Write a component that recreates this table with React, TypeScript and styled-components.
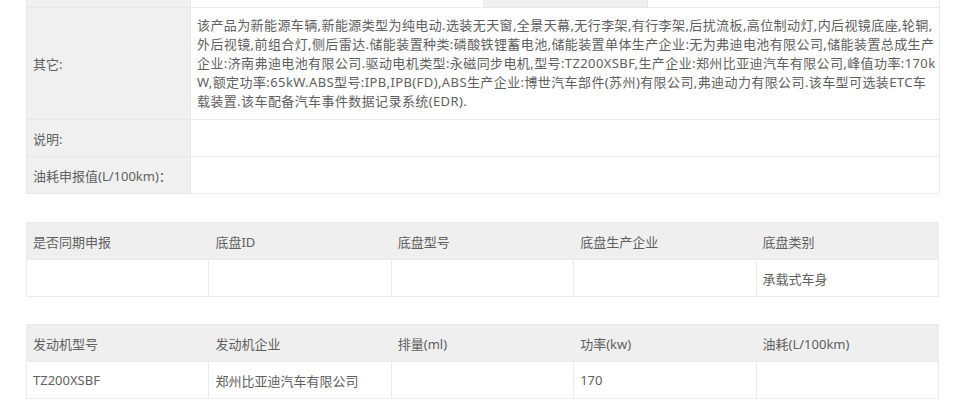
import React from "react";
import styled, { createGlobalStyle } from "styled-components";

const Global = createGlobalStyle`
  html, body { margin: 0; padding: 0; background: #fff; overflow: hidden; }
  body {
    font-family: "Noto Sans", "Noto Sans CJK SC", sans-serif;
    font-size: 13px;
    color: #606060;
  }
`;

const Page = styled.div`
  width: 960px;
  height: 407px;
  overflow: hidden;
  padding: 0 21px 0 26px;
  box-sizing: border-box;
`;

const Table = styled.table<{ $gap?: number }>`
  width: 913px;
  border-collapse: collapse;
  table-layout: fixed;
  margin-top: ${(p) => p.$gap ?? 0}px;
  border: 1px solid #ebebeb;
`;

const Label = styled.td`
  background: #f0f0f0;
  border: 1px solid #e6e6e6;
  padding: 0 6px;
  height: 36px;
  vertical-align: middle;
  white-space: nowrap;
`;

const Value = styled.td`
  background: #fff;
  border: 1px solid #ebebeb;
  padding: 0 6px;
  height: 36px;
  vertical-align: middle;
`;

const LongValue = styled(Value)`
  padding: 8px 6px;
  line-height: 19px;
`;

const Line = styled.span`
  display: block;
  white-space: nowrap;
  letter-spacing: 0.4px;
`;

const TopRow = styled.tr`
  height: 36px;
`;

const Head = styled.td`
  background: #efefef;
  border: 1px solid #ebebeb;
  border-left-color: #efefef;
  border-right-color: #efefef;
  padding: 0 6px;
  height: 36px;
  vertical-align: middle;
`;

const Cell = styled.td`
  background: #fff;
  border: 1px solid #ebebeb;
  padding: 0 6px;
  height: 36px;
  vertical-align: middle;
`;

const Shift = styled.div`
  margin-top: -30px;
`;

const otherLines = [
  "该产品为新能源车辆,新能源类型为纯电动.选装无天窗,全景天幕,无行李架,有行李架,后扰流板,高位制动灯,内后视镜底座,轮辋,",
  "外后视镜,前组合灯,侧后雷达.储能装置种类:磷酸铁锂蓄电池,储能装置单体生产企业:无为弗迪电池有限公司,储能装置总成生产",
  "企业:济南弗迪电池有限公司.驱动电机类型:永磁同步电机,型号:TZ200XSBF,生产企业:郑州比亚迪汽车有限公司,峰值功率:170k",
  "W,额定功率:65kW.ABS型号:IPB,IPB(FD),ABS生产企业:博世汽车部件(苏州)有限公司,弗迪动力有限公司.该车型可选装ETC车",
  "载装置.该车配备汽车事件数据记录系统(EDR).",
];

const chassisHead = ["是否同期申报", "底盘ID", "底盘型号", "底盘生产企业", "底盘类别"];
const chassisRow = ["", "", "", "", "承载式车身"];
const engineHead = ["发动机型号", "发动机企业", "排量(ml)", "功率(kw)", "油耗(L/100km)"];
const engineRow = ["TZ200XSBF", "郑州比亚迪汽车有限公司", "", "170", ""];

function Grid({ head, row, gap }: { head: string[]; row: string[]; gap: number }) {
  return (
    <Table $gap={gap}>
      <tbody>
        <tr>
          {head.map((h, i) => (
            <Head key={i}>{h}</Head>
          ))}
        </tr>
        <tr>
          {row.map((c, i) => (
            <Cell key={i}>{c}</Cell>
          ))}
        </tr>
      </tbody>
    </Table>
  );
}

export default function App() {
  return (
    <Page>
      <Global />
      <Shift>
        <Table>
          <colgroup>
            <col style={{ width: 164 }} />
            <col style={{ width: 293 }} />
            <col style={{ width: 164 }} />
            <col style={{ width: 292 }} />
          </colgroup>
          <tbody>
            <TopRow>
              <Label></Label>
              <Value></Value>
              <Label></Label>
              <Value></Value>
            </TopRow>
            <tr>
              <Label>其它:</Label>
              <LongValue colSpan={3}>
                {otherLines.map((l, i) => (
                  <Line key={i}>{l}</Line>
                ))}
              </LongValue>
            </tr>
            <tr>
              <Label>说明:</Label>
              <Value colSpan={3}></Value>
            </tr>
            <tr>
              <Label>油耗申报值(L/100km)：</Label>
              <Value colSpan={3}></Value>
            </tr>
          </tbody>
        </Table>
      </Shift>
      <Grid head={chassisHead} row={chassisRow} gap={28} />
      <Grid head={engineHead} row={engineRow} gap={27} />
    </Page>
  );
}
